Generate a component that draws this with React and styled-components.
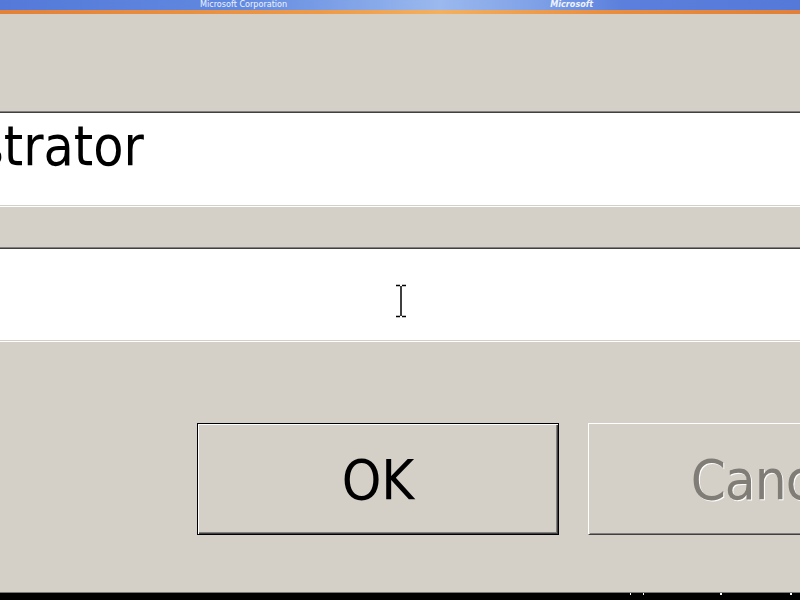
import React from 'react';
import styled, { createGlobalStyle } from 'styled-components';

const GlobalStyle = createGlobalStyle`
  html, body {
    margin: 0;
    padding: 0;
    background: #d4d0c8;
  }
  body {
    font-family: "DejaVu Sans", "Liberation Sans", sans-serif;
  }
`;

const Screen = styled.div`
  position: relative;
  width: 800px;
  height: 600px;
  overflow: hidden;
  background: #d4d0c8;
  display: flex;
  flex-direction: column;
`;

const Banner = styled.div`
  height: 10px;
  flex-shrink: 0;
  display: flex;
  align-items: flex-end;
  overflow: hidden;
  background: linear-gradient(
    90deg,
    #5479d9 0%,
    #6189e0 30%,
    #9bb9ee 55%,
    #7c9ee6 68%,
    #5a7fdc 78%,
    #5579d9 100%
  );
`;

const BannerText = styled.span`
  font-family: "DejaVu Sans Condensed", "DejaVu Sans", sans-serif;
  font-stretch: condensed;
  font-size: 9px;
  line-height: 9px;
  color: #eef3ff;
  white-space: nowrap;
  margin-bottom: 1px;
  margin-left: ${({ $left }) => $left}px;
  font-weight: ${({ $bold }) => ($bold ? 700 : 400)};
  font-style: ${({ $bold }) => ($bold ? 'italic' : 'normal')};
`;

const Stripe = styled.div`
  height: 4px;
  flex-shrink: 0;
  background: linear-gradient(
    90deg,
    #e2813a 0%,
    #ec9a48 40%,
    #f2b060 55%,
    #e98f40 75%,
    #e0803a 100%
  );
`;

const Field = styled.div`
  flex-shrink: 0;
  width: 820px;
  height: ${({ $h }) => $h}px;
  margin-top: ${({ $top }) => $top}px;
  box-sizing: border-box;
  background: #fff;
  border-top: 1px solid #808080;
  border-bottom: 1px solid #ffffff;
  box-shadow: inset 0 1px 0 #404040, inset 0 -1px 0 #d4d0c8;
  display: flex;
  align-items: center;
  overflow: hidden;
`;

const FieldText = styled.span`
  font-family: "DejaVu Sans Condensed", "DejaVu Sans", sans-serif;
  font-stretch: condensed;
  font-size: 55px;
  line-height: 1;
  color: #000;
  white-space: nowrap;
  margin-left: -22px;
  margin-top: -26px;
`;

const ButtonRow = styled.div`
  flex-shrink: 0;
  margin-top: 81px;
  padding-left: 197px;
  display: flex;
  gap: 29px;
`;

const Button = styled.div`
  flex-shrink: 0;
  width: 362px;
  height: 112px;
  box-sizing: border-box;
  background: #d4d0c8;
  display: flex;
  align-items: center;
  justify-content: center;
  font-family: "DejaVu Sans Condensed", "DejaVu Sans", sans-serif;
  font-stretch: condensed;
  font-size: 56px;
  letter-spacing: ${({ $disabled }) => ($disabled ? '-1px' : '0')};
  padding-left: ${({ $disabled }) => ($disabled ? '8px' : '0')};
  color: ${({ $disabled }) => ($disabled ? '#807c76' : '#000')};
  text-shadow: ${({ $disabled }) => ($disabled ? '1px 1px 0 #ffffff' : 'none')};
  border: 1px solid;
  border-color: ${({ $default }) =>
    $default ? '#000 #000 #000 #000' : '#ffffff #404040 #404040 #ffffff'};
  box-shadow: ${({ $default }) =>
    $default
      ? 'inset 1px 1px 0 #ffffff, inset -1px -1px 0 #404040, inset -2px -2px 0 #808080'
      : 'inset 1px 1px 0 #d4d0c8, inset -1px -1px 0 #808080'};
`;

const Filler = styled.div`
  flex: 1;
`;

const Taskbar = styled.div`
  flex-shrink: 0;
  height: 7px;
  background: #000;
  border-top: 1px solid #7a7874;
  display: flex;
  align-items: flex-start;
`;

const Tick = styled.span`
  width: ${({ $w }) => $w || 1}px;
  height: 2px;
  margin-left: ${({ $left }) => $left}px;
  background: #fff;
`;

const Cursor = styled.svg`
  position: absolute;
  left: 394px;
  top: 284px;
`;

export default function App() {
  return (
    <Screen>
      <GlobalStyle />
      <Banner>
        <BannerText $left={200}>Microsoft Corporation</BannerText>
        <BannerText $left={263} $bold>Microsoft</BannerText>
      </Banner>
      <Stripe />
      <Field $top={97} $h={96}>
        <FieldText>strator</FieldText>
      </Field>
      <Field $top={40} $h={95} />
      <ButtonRow>
        <Button $default>OK</Button>
        <Button $disabled>Cancel</Button>
      </ButtonRow>
      <Filler />
      <Taskbar>
        <Tick $left={630} />
        <Tick $left={12} />
        <Tick $left={76} $w={2} />
        <Tick $left={68} $w={2} />
      </Taskbar>
      <Cursor width="14" height="34" viewBox="0 0 14 34">
        <path d="M2 1.5h4M8 1.5h4M7 2v30M2 32.5h4M8 32.5h4" stroke="#000" strokeWidth="1.5" fill="none" />
      </Cursor>
    </Screen>
  );
}
